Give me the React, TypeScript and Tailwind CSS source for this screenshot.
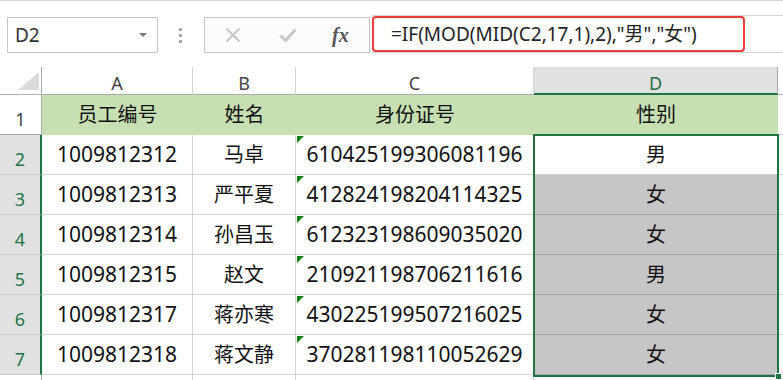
import React from "react";

type Row = [string, string, string, string];

const rows: Row[] = [
  ["1009812312", "马卓", "610425199306081196", "男"],
  ["1009812313", "严平夏", "412824198204114325", "女"],
  ["1009812314", "孙昌玉", "612323198609035020", "女"],
  ["1009812315", "赵文", "210921198706211616", "男"],
  ["1009812317", "蒋亦寒", "430225199507216025", "女"],
  ["1009812318", "蒋文静", "370281198110052629", "女"],
];

const FONT = "font-['Noto_Sans','Noto_Sans_CJK_SC',sans-serif]";

function Toolbar() {
  return (
    <div className="flex h-[67px] items-start border-t border-[#d5d5d5] bg-white">
      {/* name box */}
      <div className="ml-[7px] mt-[16px] flex h-[36px] w-[151px] items-center justify-between border border-[#c6c6c6] bg-white pl-[7px] pr-[10px]">
        <span className={`${FONT} text-[19px] text-[#333]`}>D2</span>
        <span className="h-0 w-0 border-x-[4px] border-t-[4px] border-x-transparent border-t-[#777]" />
      </div>
      {/* grip dots */}
      <div className="ml-[21px] mr-[22px] mt-[27px] flex flex-col gap-[3px]">
        <span className="h-[3px] w-[3px] bg-[#a8a8a8]" />
        <span className="h-[3px] w-[3px] bg-[#a8a8a8]" />
        <span className="h-[3px] w-[3px] bg-[#a8a8a8]" />
      </div>
      {/* cancel / enter / fx */}
      <div className="mt-[16px] flex h-[36px] w-[166px] items-center border border-[#c6c6c6] bg-[#fcfcfc] pl-[20px]">
        <svg width="16" height="16" viewBox="0 0 16 16" className="shrink-0">
          <path d="M1.5 1.5 L14.5 14.5 M14.5 1.5 L1.5 14.5" stroke="#c4c4c4" strokeWidth="1.8" fill="none" />
        </svg>
        <svg width="18" height="16" viewBox="0 0 18 16" className="ml-[38px] shrink-0">
          <path d="M1.5 8.5 L6.5 13.5 L16.5 2.5" stroke="#c8c8c8" strokeWidth="3" fill="none" />
        </svg>
        <span className="ml-[35px] font-['Liberation_Serif',serif] text-[20px] font-bold italic leading-none text-[#555]">
          fx
        </span>
      </div>
      {/* formula bar */}
      <div className="ml-[2px] mt-[14px] flex h-[38px] flex-1 border-y border-[#d4d4d4] bg-white">
        <div className="flex h-full w-[373px] items-center rounded-[4px] border-2 border-[#ee3b3b] pl-[17px]">
          <span className={`${FONT} text-[19px] text-[#222]`}>=IF(MOD(MID(C2,17,1),2),"男","女")</span>
        </div>
      </div>
    </div>
  );
}

function Grid() {
  const line = "border-[#d4d4d4]";
  return (
    <div className="relative grid grid-cols-[42px_151px_103px_238px_244px_1fr] grid-rows-[28px_repeat(7,40px)_5px] bg-white">
      {/* column headers */}
      <div className="flex items-end justify-end border-r border-b border-[#ababab] pb-[4px] pr-[2px]">
        <span className="h-0 w-0 border-b-[18px] border-l-[21px] border-b-[#dadada] border-l-transparent" />
      </div>
      {["A", "B", "C"].map((c) => (
        <div key={c} className={`flex items-center justify-center border-r border-b border-b-[#ababab] ${line} pt-[5px] ${FONT} text-[18px] text-[#444]`}>
          {c}
        </div>
      ))}
      <div className={`flex items-center justify-center border-r border-b-2 border-r-[#ababab] border-b-[#217346] bg-[#e1e1e1] pt-[6px] ${FONT} text-[18px] text-[#217346]`}>
        D
      </div>
      <div className="border-b border-[#ababab]" />

      {/* row 1 */}
      <div className={`flex items-end justify-center border-r border-b border-[#ababab] pb-[1px] ${FONT} text-[18px] text-[#444]`}>1</div>
      {["员工编号", "姓名", "身份证号", "性别"].map((h) => (
        <div key={h} className={`flex items-center justify-center bg-[#c6e0b4] ${FONT} text-[20px] text-[#111]`}>
          {h}
        </div>
      ))}
      <div className={`border-b ${line}`} />

      {/* data rows */}
      {rows.map((r, i) => (
        <React.Fragment key={r[0]}>
          <div className={`flex items-end justify-center border-r-2 border-b border-r-[#217346] border-b-[#c8c8c8] bg-[#e1e1e1] pb-[1px] ${FONT} text-[18px] text-[#217346]`}>
            {i + 2}
          </div>
          <div className={`flex items-center justify-center border-r border-b ${line} ${FONT} text-[21px] text-[#111]`}>{r[0]}</div>
          <div className={`flex items-center justify-center border-r border-b ${line} ${FONT} text-[20px] text-[#111]`}>{r[1]}</div>
          <div className={`relative flex items-center justify-center border-r border-b ${line} ${FONT} text-[21px] text-[#111]`}>
            <span className="absolute left-[1px] top-[1px] h-0 w-0 border-t-[7px] border-r-[7px] border-t-[#158015] border-r-transparent" />
            {r[2]}
          </div>
          <div
            className={`flex items-center justify-center border-b ${FONT} text-[20px] text-[#111] ${
              i === 0 ? "bg-white border-[#d4d4d4]" : "bg-[#c6c6c6] border-[#a8a8a8]"
            }`}
          >
            {r[3]}
          </div>
          <div className={`border-b border-l ${line}`} />
        </React.Fragment>
      ))}

      {/* row 8 stub */}
      <div className="border-r border-[#ababab]" />
      <div className={`border-r ${line}`} />
      <div className={`border-r ${line}`} />
      <div className={`border-r ${line}`} />
      <div />
      <div className={`border-l ${line}`} />

      {/* selection outline D2:D7 */}
      <div className="pointer-events-none absolute left-[533px] top-[67px] h-[243px] w-[246px] border-2 border-[#217346]">
        <span className="absolute -bottom-[5px] -right-[5px] h-[7px] w-[7px] border border-white bg-[#217346]" />
      </div>
    </div>
  );
}

export default function App() {
  return (
    <div className="h-[380px] w-[783px] overflow-hidden bg-white">
      <Toolbar />
      <Grid />
    </div>
  );
}
